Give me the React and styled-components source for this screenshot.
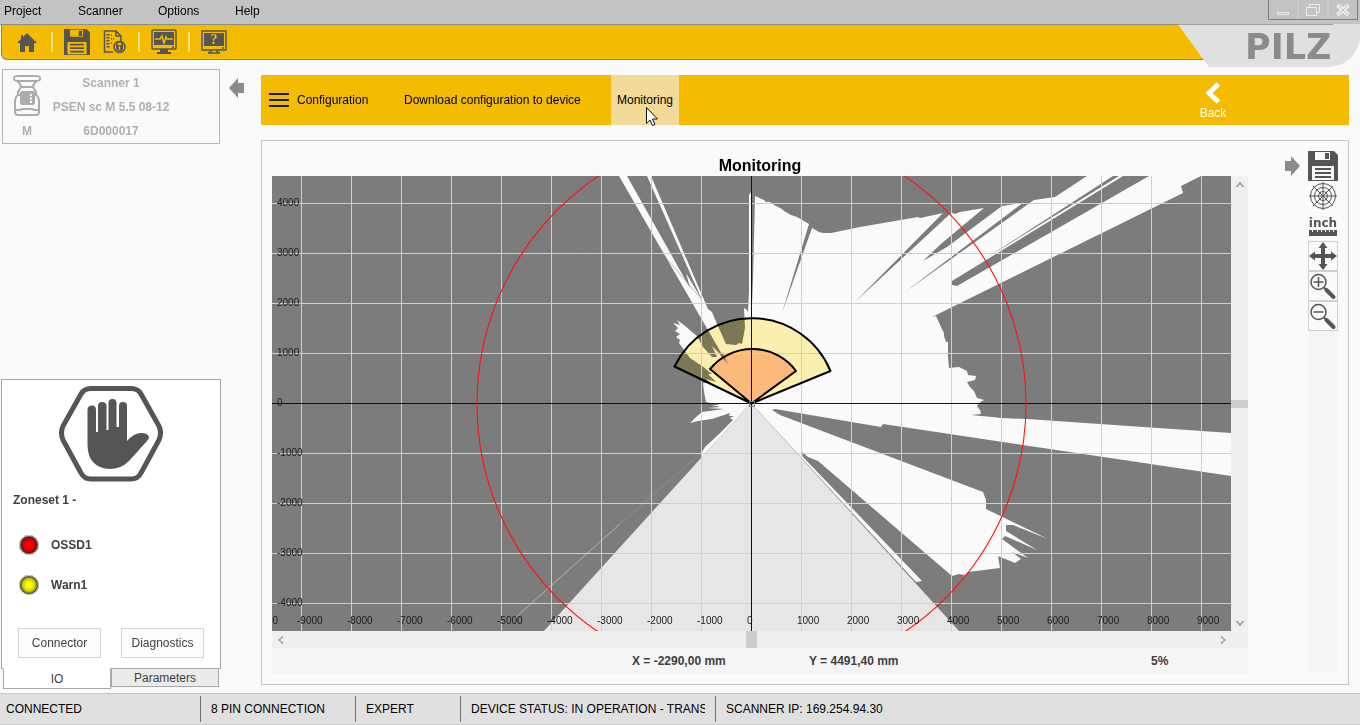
import React from 'react';
import styled, { createGlobalStyle } from 'styled-components';

const App = () => {
  return (
    <Page>
      <GlobalStyle />
      <MenuBar>
        <MenuItems>
          <MenuItem $width={74}>Project</MenuItem>
          <MenuItem $width={80}>Scanner</MenuItem>
          <MenuItem $width={77}>Options</MenuItem>
          <MenuItem $width={50}>Help</MenuItem>
        </MenuItems>
        <WindowButtons>
          <WindowButton aria-label="Minimize">
            <svg width="14" height="14"><rect x="1.5" y="9.5" width="11" height="2" fill="none" stroke="#ececec" /></svg>
          </WindowButton>
          <WindowButton aria-label="Restore">
            <svg width="14" height="14" fill="none" stroke="#ececec"><path d="M3.5 4V1.5h10v8H11" /><rect x="0.5" y="4.5" width="10" height="8" /></svg>
          </WindowButton>
          <WindowButton aria-label="Close">
            <svg width="14" height="14" fill="none"><path d="M1.5 2l11 10M12.500 2L1.500 12" stroke="#efefef" strokeWidth="4" /><path d="M2 2l10 10M12 2L2 12" stroke="#c3c3c3" strokeWidth="1" /></svg>
          </WindowButton>
        </WindowButtons>
      </MenuBar>

      <Toolbar>
        <IconButton aria-label="Home"><HomeIcon /></IconButton>
        <Separator />
        <IconButton aria-label="Save project"><SaveIcon size={26} paper="#f4bc00" /></IconButton>
        <IconButton aria-label="Protocol"><ReportIcon /></IconButton>
        <Separator />
        <IconButton aria-label="Monitor"><MonitorIcon /></IconButton>
        <Separator />
        <IconButton aria-label="Help"><HelpIcon /></IconButton>
        <Brand>
          <svg width="182" height="44">
            <path d="M0 1H182V44H31Z" fill="#fafafa" />
            <path d="M0 1H182V16Q176 44 148 44H31Z" fill="#e0e0e0" />
            <path d="M0 1.500H155" stroke="#a0a0a0" />
            <text x="67" y="36" fill="#8b8b8b" fontFamily="'DejaVu Sans', sans-serif" fontWeight="bold" fontSize="35">PILZ</text>
          </svg>
        </Brand>
      </Toolbar>

      <Workspace>
        <Sidebar>
          <SidebarTop>
            <ScannerCard>
              <ScannerIcon />
              <CardLine>Scanner 1</CardLine>
              <CardLine>PSEN sc M 5.5 08-12</CardLine>
              <CardType>M</CardType>
              <CardLine>6D000017</CardLine>
            </ScannerCard>
            <ArrowButton aria-label="Collapse sidebar">
              <svg width="15" height="20" fill="#8b8b8b"><path d="M0 10L9 0V5H15V15H9V20Z" /></svg>
            </ArrowButton>
          </SidebarTop>
          <StatusPanel>
            <HandIcon />
            <Zoneset>Zoneset 1 -</Zoneset>
            <SignalList>
              <Signal><Led color="red" />OSSD1</Signal>
              <Signal><Led color="yellow" />Warn1</Signal>
            </SignalList>
            <PanelButtons>
              <PanelButton>Connector</PanelButton>
              <PanelButton>Diagnostics</PanelButton>
            </PanelButtons>
          </StatusPanel>
          <Tabs>
            <Tab $active>IO</Tab>
            <Tab>Parameters</Tab>
          </Tabs>
        </Sidebar>

        <Main>
          <Nav>
            <NavButton $width={135}>
              <svg width="20" height="16" stroke="#1a1a1a" strokeWidth="2"><path d="M0 2H20M0 8H20M0 14H20" /></svg>
              Configuration
            </NavButton>
            <NavButton $width={207}>Download configuration to device</NavButton>
            <NavButton $active $width={68}>
              Monitoring
              <Pointer>
                <svg width="12" height="20"><path d="M.5.5V16.500L4 13L6.500 18.500L9 17.500L6.500 12H11.500Z" fill="#fff" stroke="#111" /></svg>
              </Pointer>
            </NavButton>
            <BackButton>
              <svg width="16" height="24" fill="none" stroke="#fff" strokeWidth="5"><path d="M13.500 3L4 12L13.500 21" /></svg>
              Back
            </BackButton>
          </Nav>

          <Content>
            <Plot>
              <Title>Monitoring</Title>
              <PlotRow>
                <ScanView />
                <VerticalScroll>
                  <Chevron angle={180} />
                  <Thumb $vertical />
                  <Chevron angle={0} />
                </VerticalScroll>
              </PlotRow>
              <HorizontalScroll>
                <Chevron angle={90} />
                <Thumb />
                <Chevron angle={270} />
              </HorizontalScroll>
              <Readout>
                <span />
                <span>X = -2290,00 mm</span>
                <span>Y = 4491,40 mm</span>
                <span>5%</span>
              </Readout>
            </Plot>
            <ToolsToggle aria-label="Collapse tools">
              <svg width="15" height="20" fill="#8b8b8b"><path d="M15 10L6 0V5H0V15H6V20Z" /></svg>
            </ToolsToggle>
            <Tools>
              <ToolButton aria-label="Save"><SaveIcon size={30} paper="#fafafa" /></ToolButton>
              <ToolButton aria-label="Polar grid"><PolarIcon /></ToolButton>
              <ToolButton aria-label="Units">
                <InchLabel>inch</InchLabel>
                <svg width="28" height="6"><path d="M0 0H3V2H4V0H8V2H9V0H12V2H13V0H16V2H17V0H20V2H21V0H24V2H25V0H28V6H0Z" fill={dark} /></svg>
              </ToolButton>
              <ToolButton $framed aria-label="Move">
                <svg width="28" height="28" fill={dark}><path d="M14 0L18.500 6H16V12H22V9.500L28 14L22 18.500V16H16V22H18.500L14 28L9.500 22H12V16H6V18.500L0 14L6 9.500V12H12V6H9.500Z" /></svg>
              </ToolButton>
              <ToolButton $framed aria-label="Zoom in"><LensIcon plus /></ToolButton>
              <ToolButton $framed aria-label="Zoom out"><LensIcon /></ToolButton>
            </Tools>
          </Content>
        </Main>
      </Workspace>

      <StatusBar>
        <StatusCell $width={200}>CONNECTED</StatusCell>
        <StatusCell $width={155} $divided>8 PIN CONNECTION</StatusCell>
        <StatusCell $width={105} $divided>EXPERT</StatusCell>
        <StatusCell $width={255} $divided><Clip>DEVICE STATUS: IN OPERATION - TRANS</Clip></StatusCell>
        <StatusCell $width={300} $divided>SCANNER IP: 169.254.94.30</StatusCell>
      </StatusBar>
    </Page>
  );
};

const dark = '#555';

// Scan view: 50 units per 1000 mm, sensor in (751, 403)
const columns = Array.from({ length: 19 }, (_, i) => i - 9);
const rows = [4, 3, 2, 1, 0, -1, -2, -3, -4];

const openArea = `
  751,403 751,192 749,195 749,292 748,312 746,309 744,308 745,328 742,344 739,343 736,345 726,344 717,324 712,312 708,309
  651,176 647,176 702,300 696,290 686,273 690,288 627,176 619,176 727,363 718,352 712,346 717,357 712,357 703,347 697,336
  692,332 684,325 677,320 680,325 673,323 678,328 675,331 680,334 676,337 680,340 679,343 684,350 690,358 702,366 712,374 708,374 716,382 706,379 711,383
  703,383 704,392 706,402 720,405 712,405 720,407 708,408 724,409 702,412 695,418 690,423 698,421 712,419 730,413 729,416 734,416
  730,418 733,420 728,425 718,435 705,447 702,452 702,457`;

const openAreaRight = `
  751,403 752,305 753,280 755,196 764,200 766,202 770,202 774,205 782,209 784,211 791,215 797,217 809,224 782,313 812,228
  819,232 823,233 831,233 860,227 918,217 920,218 943,213 855,302 950,214 953,213 955,214 960,212 984,208 942,243 923,261 947,247 1002,206
  1022,203 1024,202 905,292 1034,200 1055,197 1087,176 1113,176 983,260 1119,176 1123,176 952,281 952,285 957,286 1149,176 1201,176 1181,186 1183,193
  932,317 936,316 941,327 944,333 944,336 946,342 948,342 948,357 949,368 959,367 967,371 968,375 976,376 975,380 967,382 970,387 974,391
  977,398 984,400 979,403 977,406 980,410 981,414 971,415 1002,418 1027,419 1231,433 1231,476 1070,452 883,424 881,427 775,409 772,410 780,415
  983,492 986,500 986,509 1048,539 1013,525 1006,525 1006,531 1037,550 1005,536 1002,539 1028,558 1012,552 1021,559 1015,563 998,556 1000,568
  968,572 965,575 959,574 952,576 818,461 808,457 801,451 803,457 922,581 916,582`;

const ScanView = () => (
  <Scan viewBox="272 176 959 455" preserveAspectRatio="xMidYMid slice">
    <rect x="0" y="0" width="1600" height="900" fill="#7c7c7c" />
    <polygon points={openArea} fill="#fafafa" />
    <polygon points={openAreaRight} fill="#fafafa" />
    <polygon points="751,403 543,632 960,632" fill="#e6e6e6" />
    <g fill="none">
      <path d="M702 452L620 524" stroke="#8d8d8d" />
      <path d="M620 524L515 618" stroke="#b4b4b4" />
      <path d="M677 320L586 236M671 315L562 238M702 300L600 180" stroke="#848484" strokeWidth="0.5" />
    </g>
    <g style={{ mixBlendMode: 'multiply' }}>
      <path d="M751.500 403.500L674.500 366.500A85.500 85.500 0 0 1 830.500 371Z" fill="#fff4b2" />
    </g>
    <path d="M751.500 403.500L710 369A54.500 54.500 0 0 1 796 371Z" fill="#fcb97b" />
    <path d="M720 354L723 352L728 364L722 358Z" fill="#7d5a3c" opacity="0.6" />
    <g stroke="#d0d0d0" shapeRendering="crispEdges">
      {columns.map((n) => <path key={n} d={`M${751.5 + n * 50} 0V900`} />)}
      {rows.map((n) => <path key={n} d={`M0 ${403.5 - n * 50}H1600`} />)}
    </g>
    <g fill="none" stroke="#000" strokeWidth="2" strokeLinejoin="round">
      <path d="M751.500 403.500L674.500 366.500A85.500 85.500 0 0 1 830.500 371Z" />
      <path d="M751.500 403.500L710 369A54.500 54.500 0 0 1 796 371Z" />
    </g>
    <g stroke="#111" shapeRendering="crispEdges">
      <path d="M751.500 0V900" />
      <path d="M0 403.500H1600" />
    </g>
    <path d="M749.500 401.500h5v5h-5z" fill="none" stroke="#777" />
    <circle cx="751.5" cy="404" r="274.5" fill="none" stroke="#ff1010" strokeWidth="1.1" />
    <AxisLabels>
      {rows.map((n) => <text key={n} x="277" y={406 - n * 50}>{n * 1000}</text>)}
      <text x="247" y="624">-10000</text>
      {columns.map((n) => <text key={n} x={747 + n * 50} y="624">{n * 1000}</text>)}
    </AxisLabels>
  </Scan>
);

const Chevron = ({ angle }) => (
  <ScrollButton aria-label="Scroll">
    <svg width="10" height="10" fill="none" stroke="#9a9a9a" strokeWidth="1.5">
      <path d="M1.500 3L5 7L8.500 3" transform={`rotate(${angle} 5 5)`} />
    </svg>
  </ScrollButton>
);

const HomeIcon = () => (
  <svg width="20" height="19" fill={dark}>
    <path d="M10 0L20 10H17V19H12V13H8V19H3V10H0L4 6V2H6V4Z" />
  </svg>
);

const SaveIcon = ({ size, paper }) => (
  <svg width={size} height={size} viewBox="0 0 30 30">
    <path d="M0 0H26L30 4V30H0Z" fill={dark} />
    <path d="M7 1H22V9H7ZM4 15H26V29H4Z" fill={paper} />
    <path d="M17 2H21V8H17ZM7 17H23V19H7ZM7 21H23V23H7ZM7 25H23V27H7Z" fill={dark} />
  </svg>
);

const ReportIcon = () => (
  <svg width="24" height="24" fill="none" stroke={dark} strokeWidth="1.5">
    <path d="M11 22H2.500V1H14L19 6V11M14 1V6H19" />
    <path d="M6 4V19" strokeWidth="3" strokeDasharray="1.5 1.5" />
    <path d="M9 5H11M9 9H12M9 13H11" strokeDasharray="1 1" />
    <circle cx="17.5" cy="17" r="5.5" />
    <path d="M14 15H21V19Q17.500 24 14 19Z" fill={dark} stroke="none" />
    <path d="M15 15V12H20V15" />
    <path d="M17.500 16V20" stroke="#f4bc00" />
  </svg>
);

const MonitorIcon = () => (
  <svg width="26" height="26" fill="none" stroke={dark}>
    <rect x="1" y="1" width="24" height="19" rx="1" strokeWidth="1.5" />
    <rect x="3" y="3" width="20" height="13" fill={dark} stroke="none" />
    <path d="M4 10H9L11 7L13 14L15 8L16 10H22" stroke="#f4bc00" strokeWidth="1.5" />
    <path d="M21 18H23" strokeWidth="1.5" />
    <path d="M9 20H17V23H20V25H6V23H9Z" fill={dark} stroke="none" />
  </svg>
);

const HelpIcon = () => (
  <svg width="26" height="24" fill="none" stroke={dark}>
    <rect x="1" y="1" width="24" height="19" strokeWidth="1.5" />
    <rect x="3" y="3" width="20" height="13" fill={dark} stroke="none" />
    <text x="13" y="14" textAnchor="middle" fontFamily="'Liberation Serif', serif" fontWeight="bold" fontSize="14" fill="#f4bc00" stroke="none">?</text>
    <path d="M21 18H23M10 20V22.500H7M16 20V22.500H19M7 23H19" strokeWidth="1.5" />
  </svg>
);

const ScannerIcon = () => (
  <ScannerDrawing width="28" height="41" fill="none" stroke="#acacac" strokeWidth="2">
    <path d="M1 3Q1 1 6 1H22Q27 1 27 3V4Q27 6 22 6H6Q1 6 1 4Z" />
    <path d="M4 6Q8 9 8 12H20Q20 9 24 6" />
    <path d="M8 12L5 17V20H23V17L20 12" />
    <path d="M5 20Q2 22 2 27V37Q2 40 5 40H23Q26 40 26 37V27Q26 22 23 20" />
    <path d="M2 35H7L9 34H19L21 35H26" />
    <rect x="8" y="17" width="13" height="12" rx="1" fill="#acacac" />
    <path d="M18 19V29" stroke="#fff" strokeDasharray="2 1.5" />
  </ScannerDrawing>
);

const HandIcon = () => (
  <HandDrawing width="104" height="96" fill={dark}>
    <path d="M32 2.500H72Q79 2.500 82 8L100 40Q103 47 100 54L82 87Q79 93 72 93H32Q25 93 22 87L4 54Q1 47 4 40L22 8Q25 2.500 32 2.500Z" fill="#fff" stroke={dark} strokeWidth="5" />
    <path d="M28.500 24Q28.500 19.500 33 19.500Q37 19.500 37 24V46H39V20Q39 16 43 16Q47.500 16 47.500 20V44H49.500V17Q49.500 13 53.500 13Q57.500 13 57.500 17V41H60V20Q60 16 64 16Q68 16 68 20V55Q75 47 82 47Q89 47 90 51Q90 53 88 55L70 75Q62 83 51 83Q28.500 82 28.500 58Z" />
  </HandDrawing>
);

const PolarIcon = () => (
  <svg width="28" height="28" fill="none" stroke={dark}>
    <circle cx="14" cy="14" r="12.5" />
    <circle cx="14" cy="14" r="8.5" />
    <circle cx="14" cy="14" r="4.5" />
    <path d="M14 0V28M0 14H28M4 4L24 24M24 4L4 24" />
  </svg>
);

const LensIcon = ({ plus }) => (
  <svg width="28" height="28" fill="none" stroke={dark}>
    <circle cx="9.5" cy="10" r="7.5" strokeWidth="1.5" />
    <path d={plus ? 'M4.500 10H14.500M9.500 5V15' : 'M4.500 10H14.500'} strokeWidth="1.5" />
    <path d="M15 15.500L18 18.500" strokeWidth="2" />
    <path d="M17.500 18L24.500 25" strokeWidth="4" strokeLinecap="round" />
  </svg>
);

// Styled components
const GlobalStyle = createGlobalStyle`
  * {
    box-sizing: border-box;
  }
  body {
    margin: 0;
    background: #fafafa;
    color: #000;
    font: 12px/16px 'Liberation Sans', Arial, sans-serif;
  }
  button {
    font: inherit;
    color: inherit;
    padding: 0;
    border: 0;
    background: none;
  }
  svg {
    display: block;
    flex: none;
  }
`;

const Page = styled.div`
  min-height: 100vh;
  display: flex;
  flex-direction: column;
`;

const MenuBar = styled.header`
  display: flex;
  justify-content: space-between;
  height: 25px;
  padding-right: 2px;
  background: #c3c3c3;
  border-bottom: 1px solid #8e8e8e;
`;

const MenuItems = styled.nav`
  display: flex;
  align-items: center;
  height: 22px;
  padding-left: 4px;
`;

const MenuItem = styled.button`
  width: ${props => props.$width}px;
  text-align: left;
`;

const WindowButtons = styled.div`
  display: flex;
  width: 90px;
  height: 20px;
  border: 1px solid #7e7e7e;
  border-top: 0;
`;

const WindowButton = styled.button`
  flex: 1;
  display: flex;
  align-items: center;
  justify-content: center;

  & + & {
    border-left: 2px solid #cbcbcf;
  }
`;

const Toolbar = styled.div`
  position: relative;
  display: flex;
  align-items: center;
  gap: 11px;
  height: 35px;
  margin-left: 1px;
  padding-left: 12px;
  background: #f4bc00;
  border: solid #8c8664;
  border-width: 0 0 1px 1px;
  border-bottom-left-radius: 6px;
`;

const IconButton = styled.button`
  display: flex;
  align-items: center;
  justify-content: center;
  width: 26px;
  height: 30px;
`;

const Separator = styled.span`
  width: 2px;
  height: 20px;
  background: #fae08a;
`;

/* the logo plate hangs over the end of the toolbar */
const Brand = styled.div`
  position: absolute;
  top: -2px;
  right: 0;
`;

const Workspace = styled.div`
  flex: 1;
  display: grid;
  grid-template-columns: 260px minmax(0, 1fr);
  padding-right: 11px;
`;

const Sidebar = styled.aside`
  display: flex;
  flex-direction: column;
  justify-content: space-between;
  padding: 9px 0 4px 1px;
`;

const SidebarTop = styled.div`
  flex: 1;
  display: flex;
  align-items: flex-start;
  gap: 9px;
  padding-left: 1px;
`;

const ScannerCard = styled.section`
  display: grid;
  grid-template-columns: 48px 1fr 48px;
  grid-template-rows: 24px 24px 23px;
  align-items: center;
  width: 218px;
  height: 75px;
  padding-top: 1px;
  border: 1px solid #b4b4b4;
  color: #b0b0b0;
  font-weight: bold;
  text-align: center;
  white-space: nowrap;
`;

const ScannerDrawing = styled.svg`
  grid-row: 1 / span 2;
  justify-self: center;
`;

const CardLine = styled.div`
  grid-column: 2;
`;

const CardType = styled.div`
  grid-column: 1;
`;

const ArrowButton = styled.button`
  margin-top: 9px;
`;

const StatusPanel = styled.section`
  width: 220px;
  padding: 6px 16px 10px;
  background: #fff;
  border: 1px solid #a8a8a8;
  color: #404040;
`;

const HandDrawing = styled.svg`
  margin: 0 auto;
`;

const Zoneset = styled.div`
  margin: 10px -5px 0;
  font-weight: bold;
`;

const SignalList = styled.ul`
  display: flex;
  flex-direction: column;
  gap: 20px;
  margin: 27px 0 33px;
  padding: 0;
  list-style: none;
`;

const Signal = styled.li`
  display: flex;
  align-items: center;
  gap: 12px;
  height: 20px;
  padding-left: 1px;
  font-weight: bold;
`;

const Led = styled.span`
  width: 20px;
  height: 20px;
  border: 2px solid #4a4a4a;
  border-radius: 50%;
  box-shadow: inset 0 0 2px #222;
  outline: 1px solid #d8d8d8;
  outline-offset: -1px;
  background: ${props => props.color === 'red'
    ? 'radial-gradient(#ff0000 20%, #900000)'
    : 'radial-gradient(#ffff00 20%, #909000)'};
`;

const PanelButtons = styled.div`
  display: flex;
  gap: 20px;
`;

const PanelButton = styled.button`
  width: 83px;
  height: 30px;
  background: #fdfdfd;
  border: 1px solid #d4d4d4;
`;

const Tabs = styled.div`
  position: relative;
  display: flex;
  align-items: flex-start;
  margin-top: -1px;
  padding-left: 2px;
`;

const Tab = styled.button`
  width: 108px;
  height: ${props => (props.$active ? 21 : 19)}px;
  background: ${props => (props.$active ? '#fff' : '#ebebeb')};
  border: 1px solid #a8a8a8;
  border-top-color: ${props => (props.$active ? '#fff' : '#a8a8a8')};
  color: #404040;
`;

const Main = styled.main`
  display: flex;
  flex-direction: column;
  gap: 15px;
  padding: 15px 0 8px 1px;
`;

const Nav = styled.nav`
  display: flex;
  height: 50px;
  padding-left: 8px;
  background: #f4bc00;
`;

const NavButton = styled.button`
  position: relative;
  display: flex;
  align-items: center;
  gap: 8px;
  width: ${props => props.$width}px;
  padding-left: ${props => (props.$active ? 6 : 0)}px;
  background: ${props => (props.$active ? '#f4da98' : 'none')};
  white-space: nowrap;
`;

const Pointer = styled.span`
  position: absolute;
  left: 35px;
  top: 32px;
`;

const BackButton = styled.button`
  display: flex;
  flex-direction: column;
  align-items: center;
  width: 60px;
  margin-left: auto;
  margin-right: 106px;
  padding-top: 6px;
  color: #fff;
`;

const Content = styled.section`
  flex: 1;
  display: flex;
  align-items: stretch;
  padding: 0 10px;
  border: 1px solid #c6c6c6;
`;

const Plot = styled.div`
  flex: 1;
  min-width: 0;
  display: flex;
  flex-direction: column;
  padding-bottom: 10px;
`;

const Title = styled.h1`
  margin: 0;
  padding: 14px 0 0;
  font-size: 16px;
  line-height: 21px;
  text-align: center;
`;

const PlotRow = styled.div`
  flex: 1;
  display: flex;
  min-height: 300px;
`;

const Scan = styled.svg`
  flex: 1;
  min-width: 0;
  width: 100%;
  height: auto;
  overflow: hidden;
`;

const AxisLabels = styled.g`
  font-size: 10px;
  fill: #1a1a1a;
`;

const VerticalScroll = styled.div`
  display: flex;
  flex-direction: column;
  justify-content: space-between;
  width: 17px;
  background: #efefef;
`;

const HorizontalScroll = styled.div`
  display: flex;
  justify-content: space-between;
  height: 17px;
  padding-right: 17px;
  background: #efefef;
`;

const ScrollButton = styled.button`
  display: flex;
  align-items: center;
  justify-content: center;
  width: 17px;
  height: 17px;
`;

const Thumb = styled.span`
  width: ${props => (props.$vertical ? 17 : 11)}px;
  height: ${props => (props.$vertical ? 8 : 17)}px;
  background: #cdcdcd;
`;

const Readout = styled.div`
  display: grid;
  grid-template-columns: 360fr 177fr 342fr 97fr;
  align-items: center;
  height: 26px;
  background: #f5f5f5;
  color: #404040;
  font-weight: bold;
  white-space: nowrap;
`;

const ToolsToggle = styled.button`
  align-self: flex-start;
  margin: 15px 8px 0 37px;
`;

const Tools = styled.div`
  width: 30px;
  margin: 10px 0 12px;
  background: linear-gradient(#fafafa 180px, #f5f5f5 180px);
`;

const ToolButton = styled.button`
  display: flex;
  flex-direction: column;
  align-items: center;
  justify-content: center;
  width: 30px;
  height: 30px;
  border: ${props => (props.$framed ? '1px solid #d0d0d0' : '0')};
`;

const InchLabel = styled.span`
  font: bold 12px/13px 'DejaVu Sans', sans-serif;
  color: ${dark};
`;

const StatusBar = styled.footer`
  display: flex;
  align-items: center;
  height: 32px;
  background: #e0e0e0;
  border: solid #c8c8c8;
  border-width: 1px 0;
`;

const StatusCell = styled.div`
  width: ${props => props.$width}px;
  height: 26px;
  padding: 0 10px 0 ${props => (props.$divided ? 10 : 6)}px;
  border-left: ${props => (props.$divided ? '1px solid #707070' : '0')};
  line-height: 26px;
  white-space: nowrap;
`;

const Clip = styled.div`
  overflow: hidden;
`;

export default App;
